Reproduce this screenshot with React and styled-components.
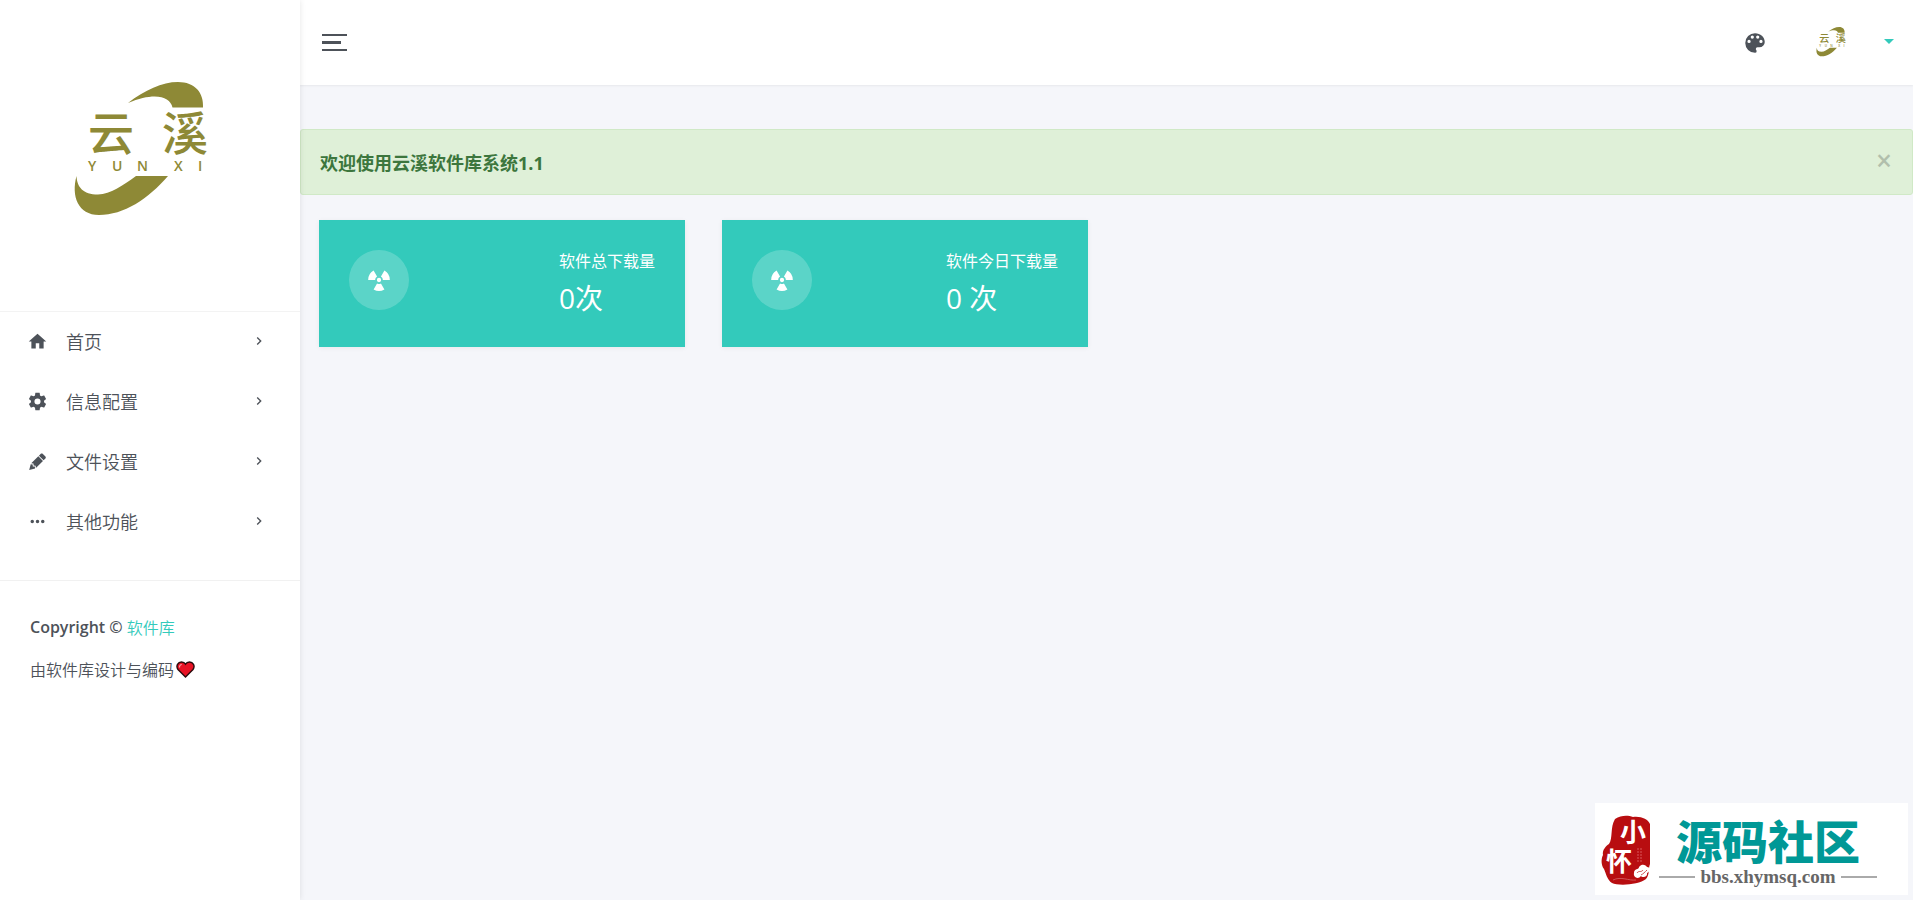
import React, { useState } from 'react';
import styled, { createGlobalStyle } from 'styled-components';

const menu = [
    { name: '首页', icon: 'home' },
    { name: '信息配置', icon: 'cog' },
    { name: '文件设置', icon: 'pencil' },
    { name: '其他功能', icon: 'dots' },
];

const stats = [
    { title: '软件总下载量', value: '0次' },
    { title: '软件今日下载量', value: '0 次' },
];

const paths = {
    home: 'M10,20V14H14V20H19V12H22L12,3L2,12H5V20H10Z',
    cog: 'M12,15.5A3.5,3.5 0 0,1 8.5,12A3.5,3.5 0 0,1 12,8.5A3.5,3.5 0 0,1 15.5,12A3.5,3.5 0 0,1 12,15.5M19.43,12.97C19.47,12.65 19.5,12.33 19.5,12C19.5,11.67 19.47,11.34 19.43,11L21.54,9.37C21.73,9.22 21.78,8.95 21.66,8.73L19.66,5.27C19.54,5.05 19.27,4.96 19.05,5.05L16.56,6.05C16.04,5.66 15.5,5.32 14.87,5.07L14.5,2.42C14.46,2.18 14.25,2 14,2H10C9.75,2 9.54,2.18 9.5,2.42L9.13,5.07C8.5,5.32 7.96,5.66 7.44,6.05L4.95,5.05C4.73,4.96 4.46,5.05 4.34,5.27L2.34,8.73C2.21,8.95 2.27,9.22 2.46,9.37L4.57,11C4.53,11.34 4.5,11.67 4.5,12C4.5,12.33 4.53,12.65 4.57,12.97L2.46,14.63C2.27,14.78 2.21,15.05 2.34,15.27L4.34,18.73C4.46,18.95 4.73,19.03 4.95,18.95L7.44,17.94C7.96,18.34 8.5,18.68 9.13,18.93L9.5,21.58C9.54,21.82 9.75,22 10,22H14C14.25,22 14.46,21.82 14.5,21.58L14.87,18.93C15.5,18.67 16.04,18.34 16.56,17.94L19.05,18.95C19.27,19.03 19.54,18.95 19.66,18.73L21.66,15.27C21.78,15.05 21.73,14.78 21.54,14.63L19.43,12.97Z',
    pencil: 'M16.84,2.73C16.45,2.73 16.07,2.88 15.77,3.17L13.65,5.29L18.95,10.6L21.07,8.5C21.67,7.89 21.67,6.94 21.07,6.36L17.9,3.17C17.6,2.88 17.22,2.73 16.84,2.73M12.94,6L4.84,14.11L7.4,14.39L7.58,16.68L9.86,16.85L10.15,19.41L18.25,11.3M4.25,15.04L2.5,21.73L9.2,19.94L8.96,17.78L6.65,17.61L6.47,15.29',
    dots: 'M16,12A2,2 0 0,1 18,10A2,2 0 0,1 20,12A2,2 0 0,1 18,14A2,2 0 0,1 16,12M10,12A2,2 0 0,1 12,10A2,2 0 0,1 14,12A2,2 0 0,1 12,14A2,2 0 0,1 10,12M4,12A2,2 0 0,1 6,10A2,2 0 0,1 8,12A2,2 0 0,1 6,14A2,2 0 0,1 4,12Z',
    palette: 'M17.5,12A1.5,1.5 0 0,1 16,10.5A1.5,1.5 0 0,1 17.5,9A1.5,1.5 0 0,1 19,10.5A1.5,1.5 0 0,1 17.5,12M14.5,8A1.5,1.5 0 0,1 13,6.5A1.5,1.5 0 0,1 14.5,5A1.5,1.5 0 0,1 16,6.5A1.5,1.5 0 0,1 14.5,8M9.5,8A1.5,1.5 0 0,1 8,6.5A1.5,1.5 0 0,1 9.5,5A1.5,1.5 0 0,1 11,6.5A1.5,1.5 0 0,1 9.5,8M6.5,12A1.5,1.5 0 0,1 5,10.5A1.5,1.5 0 0,1 6.5,9A1.5,1.5 0 0,1 8,10.5A1.5,1.5 0 0,1 6.5,12M12,3A9,9 0 0,0 3,12A9,9 0 0,0 12,21A1.5,1.5 0 0,0 13.5,19.5C13.5,19.11 13.35,18.76 13.11,18.5C12.88,18.23 12.73,17.88 12.73,17.5A1.5,1.5 0 0,1 14.23,16H16A5,5 0 0,0 21,11C21,6.58 16.97,3 12,3Z',
    radioactive: 'M12,10A2,2 0 1,1 12,14A2,2 0 1,1 12,10ZM2,12A10,10 0 0,1 7,3.34L10.2,8.88A3.6,3.6 0 0,0 8.4,12ZM22,12A10,10 0 0,0 17,3.34L13.8,8.88A3.6,3.6 0 0,1 15.6,12ZM7,20.66A10,10 0 0,0 17,20.66L13.8,15.12A3.6,3.6 0 0,1 10.2,15.12Z',
    chevron: 'M8.59,16.58L13.17,12L8.59,7.41L10,6L16,12L10,18L8.59,16.58Z',
};

function Icon({ name, size }){
    return(
        <svg width={size} height={size} viewBox="0 0 24 24" fill="currentColor" aria-hidden="true">
            <path d={paths[name]} />
        </svg>
    )
}

function Logo({ width, height }){
    return(
        <svg width={width} height={height} viewBox="0 0 200 180" fill="#8e8936" role="img" aria-label="云溪">
            <path d="M78 43C95 30 112 22 128 22C145 22 154 33 153 47.500H122.500C120 36 104 32 78 43Z" />
            <path d="M26.500 116C21 136 28 155 49 155C74 155 98 139 118 116H86C72 126 61 134 48 134.500C33 134.500 27 127 26.500 116Z" />
            <LogoName x="38" y="90">云</LogoName>
            <LogoName x="112" y="90">溪</LogoName>
            <LogoLatin x="38 62 87 124 148" y="111">YUNXI</LogoLatin>
        </svg>
    )
}

function Heart(){
    return(
        <svg width="19" height="17" viewBox="0 0 19 17" role="img" aria-label="爱心">
            <path d="M9.500 16L2 8.500C-0.500 5 2 1 5.500 1C7.500 1 8.800 2 9.500 3.200C10.200 2 11.500 1 13.500 1C17 1 19.500 5 17 8.500Z" fill="#e81224" stroke="#2b0a0c" strokeWidth="1.400" />
            <path d="M3.500 6.500C3.300 4.800 4.300 3.600 5.800 3.500" fill="none" stroke="#f69aa0" strokeWidth="1.200" />
        </svg>
    )
}

function Seal(){
    return(
        <svg width="50" height="72" viewBox="0 -1 50 72" role="img" aria-label="小怀">
            <path d="M14 4C20 0 27 0 32 2C40 1 47 4 49 9V49C47 54 49 59 45 64C38 70 17 71 11 68C6 65 5 58 3 54C0 50 0 44 2 40C1 35 5 31 8 29C12 24 9 12 14 4Z" fill="#b80d10" />
            <SealText x="19" y="27">小</SealText>
            <SealText x="5" y="56">怀</SealText>
            <path d="M37 33V47M40 33V47" stroke="#d9585a" strokeWidth="1" strokeDasharray="2 1" />
            <path d="M33 58C33 53 38 55 38 52C41 48 45 50 46 52C50 52 49 57 46 58C47 62 41 63 40 61C37 65 32 62 33 58Z" fill="#fff" />
            <path d="M36 58C38 55 40 58 42 55M40 60C42 59 44 57 46 55M12 65C20 61 28 66 35 65" fill="none" stroke="#cf5254" strokeWidth="1" />
        </svg>
    )
}

function App(){
    const [showAlert, setShowAlert] = useState(true);

    return(
        <>
            <GlobalStyle />
            <Layout>
                <Sidebar>
                    <SidebarLogo href="#">
                        <Logo width="200" height="180" />
                    </SidebarLogo>
                    <Menu>
                        {menu.map(item => (
                            <MenuItem key={item.name} href="#">
                                <Icon name={item.icon} size={21} />
                                <span>{item.name}</span>
                                <Icon name="chevron" size={16} />
                            </MenuItem>
                        ))}
                    </Menu>
                    <SidebarFooter>
                        <p><strong>Copyright ©</strong> <a href="#">软件库</a></p>
                        <p>由软件库设计与编码<Heart /></p>
                    </SidebarFooter>
                </Sidebar>

                <Main>
                    <Header>
                        <Toggler type="button" aria-label="菜单">
                            <span />
                            <span />
                            <span />
                        </Toggler>
                        <HeaderRight>
                            <IconButton type="button" aria-label="主题">
                                <Icon name="palette" size={26} />
                            </IconButton>
                            <UserButton type="button" aria-label="用户">
                                <Logo width="44" height="40" />
                                <Caret />
                            </UserButton>
                        </HeaderRight>
                    </Header>

                    <Content>
                        {showAlert && (
                            <Alert role="alert">
                                <strong>欢迎使用云溪软件库系统1.1</strong>
                                <Close type="button" aria-label="关闭" onClick={() => setShowAlert(false)}>×</Close>
                            </Alert>
                        )}
                        <Cards>
                            {stats.map(stat => (
                                <Card key={stat.title}>
                                    <CardIcon>
                                        <Icon name="radioactive" size={26} />
                                    </CardIcon>
                                    <div>
                                        <CardTitle>{stat.title}</CardTitle>
                                        <CardValue>{stat.value}</CardValue>
                                    </div>
                                </Card>
                            ))}
                        </Cards>
                    </Content>
                </Main>
            </Layout>

            <Badge>
                <Seal />
                <BadgeText>
                    <BadgeTitle>源码社区</BadgeTitle>
                    <BadgeUrl>bbs.xhymsq.com</BadgeUrl>
                </BadgeText>
            </Badge>
        </>
    )
}

export default App;

const GlobalStyle = createGlobalStyle`
    *{
        box-sizing:border-box;
    }
    body{
        margin:0;
        background:#f5f6fa;
        color:#4d5259;
        font-family:"Open Sans", "Noto Sans CJK SC", sans-serif;
        font-size:16px;
    }
    p{
        margin:0;
    }
    a{
        color:#33cabb;
        text-decoration:none;
    }
    button{
        padding:0;
        border:0;
        background:none;
        color:inherit;
        font:inherit;
        cursor:pointer;
    }
    svg{
        display:block;
        flex-shrink:0;
    }
`;

const LogoName = styled.text`
    font-family:"Noto Sans CJK SC", sans-serif;
    font-size:46px;
    font-weight:500;
`;

const LogoLatin = styled.text`
    font-family:"Open Sans", sans-serif;
    font-size:14px;
    font-weight:600;
`;

const SealText = styled.text`
    fill:#fff;
    font-family:"Noto Sans CJK SC", sans-serif;
    font-size:26px;
    font-weight:700;
`;

const Layout = styled.div`
    display:flex;
    min-height:100vh;
`;

const Sidebar = styled.aside`
    width:300px;
    flex-shrink:0;
    background:#fff;
    box-shadow:0 0 6px rgba(0, 0, 0, 0.1);
    z-index:1;
`;

const SidebarLogo = styled.a`
    display:flex;
    justify-content:center;
    padding:60px 0 71px;
    border-bottom:1px solid #f3f3f3;
`;

const Menu = styled.nav`
    padding-bottom:28px;
    border-bottom:1px solid #f1f1f1;
`;

const MenuItem = styled.a`
    display:flex;
    align-items:center;
    height:60px;
    padding:0 33px 2px 27px;
    color:#4d5259;
    font-size:18px;
    font-weight:350;

    > span{
        flex:1;
        margin-left:18px;
    }
`;

const SidebarFooter = styled.footer`
    padding:25px 30px;

    > p{
        display:flex;
        align-items:center;
        gap:4px;
        height:42px;
        font-weight:350;
        white-space:nowrap;
    }
    > p > strong{
        font-weight:600;
    }
    > p + p{
        gap:2px;
    }
`;

const Main = styled.main`
    flex:1;
    min-width:0;
`;

const Header = styled.header`
    display:flex;
    align-items:center;
    justify-content:space-between;
    height:85px;
    padding:0 19px 0 22px;
    background:#fff;
    box-shadow:0 1px 2px rgba(0, 0, 0, 0.06);
`;

const Toggler = styled.button`
    display:flex;
    flex-direction:column;
    gap:5px;

    > span{
        width:25px;
        height:2px;
        background:#4d5259;
    }
    > span:nth-child(2){
        width:19px;
        height:3px;
    }
`;

const HeaderRight = styled.div`
    display:flex;
    align-items:center;
    gap:43px;
`;

const IconButton = styled.button`
    display:flex;
`;

const UserButton = styled.button`
    display:flex;
    align-items:center;
    gap:29px;
    padding-bottom:2px;
`;

const Caret = styled.span`
    border:5px solid transparent;
    border-top-color:#33cabb;
    border-bottom:0;
`;

const Content = styled.section`
    padding-top:44px;
`;

const Alert = styled.div`
    display:flex;
    align-items:center;
    justify-content:space-between;
    height:66px;
    padding:0 20px 0 19px;
    border:1px solid #d0e9c6;
    border-radius:3px;
    background:#dff0d8;
    color:#3c763d;
    font-size:18px;
`;

const Close = styled.button`
    padding-bottom:4px;
    color:#000;
    font-size:28px;
    line-height:28px;
    font-weight:600;
    opacity:0.2;
`;

const Cards = styled.div`
    display:grid;
    grid-template-columns:repeat(4, 1fr);
    gap:37px;
    padding:25px 19px;
`;

const Card = styled.article`
    display:flex;
    justify-content:space-between;
    height:127px;
    padding:30px;
    background:#33cabb;
    box-shadow:0 1px 5px rgba(0, 0, 0, 0.06);
    color:#fff;
`;

const CardIcon = styled.span`
    display:flex;
    align-items:center;
    justify-content:center;
    width:60px;
    height:60px;
    border-radius:50%;
    background:rgba(255, 255, 255, 0.2);
`;

const CardTitle = styled.p`
    line-height:22px;
`;

const CardValue = styled.p`
    margin-top:7px;
    font-size:28px;
    line-height:38px;
`;

const Badge = styled.aside`
    position:fixed;
    right:5px;
    bottom:5px;
    z-index:2;
    display:flex;
    align-items:center;
    gap:8px;
    width:313px;
    height:92px;
    padding:2px 31px 0 6px;
    background:#fff;
`;

const BadgeText = styled.div`
    flex:1;
    padding-top:4px;
`;

const BadgeTitle = styled.p`
    color:#009896;
    font-size:46px;
    font-weight:900;
    line-height:50px;
    text-align:center;
`;

const BadgeUrl = styled.p`
    display:flex;
    align-items:center;
    gap:5px;
    color:#666;
    font-family:"Liberation Serif", serif;
    font-size:19px;
    font-weight:700;
    line-height:22px;

    &::before,
    &::after{
        content:"";
        flex:1;
        height:2px;
        background:#aaa;
    }
`;
